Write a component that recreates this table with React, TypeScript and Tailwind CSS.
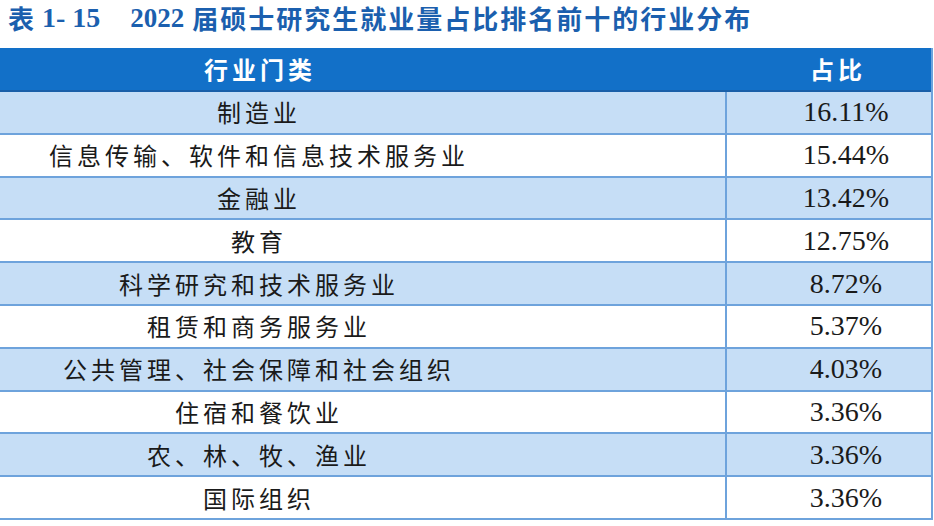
import React from 'react';

const rows: [string, string][] = [
  ['制造业', '16.11%'],
  ['信息传输、软件和信息技术服务业', '15.44%'],
  ['金融业', '13.42%'],
  ['教育', '12.75%'],
  ['科学研究和技术服务业', '8.72%'],
  ['租赁和商务服务业', '5.37%'],
  ['公共管理、社会保障和社会组织', '4.03%'],
  ['住宿和餐饮业', '3.36%'],
  ['农、林、牧、渔业', '3.36%'],
  ['国际组织', '3.36%'],
];

const cjk = "font-['Noto_Sans_CJK_SC','Noto_Sans',sans-serif]";
const serif = "font-['Liberation_Serif','Noto_Sans_CJK_SC',serif]";

const App: React.FC = () => {
  return (
    <div className="w-[934px] h-[526px] bg-white overflow-hidden">
      {/* title */}
      <div className="h-[48px] flex items-start pl-[8px] text-[#1b5fae] font-bold">
        <span className={`${cjk} text-[26px] leading-[36px]`}>表</span>
        <span className={`${serif} text-[28px] leading-[36px] ml-[8px]`}>1- 15</span>
        <span className={`${serif} text-[27px] leading-[36px] ml-[30px]`}>2022</span>
        <span className={`${cjk} text-[26px] leading-[36px] ml-[8px] tracking-[2px]`}>
          届硕士研究生就业量占比排名前十的行业分布
        </span>
      </div>

      <div className="w-[933px] border-r-2 border-[#6ea3dc]">
        {/* header */}
        <div className="h-[44px] flex bg-[#1270c8] text-white font-bold border-b-2 border-[#1a5fa8]">
          <div className={`w-[727px] pr-[207px] flex items-center justify-center ${cjk} text-[24px] tracking-[4px]`}>
            行业门类
          </div>
          <div className={`flex-1 pl-[18px] flex items-center justify-center ${cjk} text-[24px] tracking-[4px]`}>
            占比
          </div>
        </div>

        {rows.map(([name, pct], i) => (
          <div
            key={i}
            className={`h-[42.8px] flex border-b-2 border-[#6ea3dc] text-[#1a1a1a] ${
              i % 2 === 0 ? 'bg-[#c6def6]' : 'bg-white'
            }`}
          >
            <div
              className={`w-[727px] pr-[207px] flex items-center justify-center border-r-2 border-[#6ea3dc] ${cjk} text-[24px] tracking-[4px]`}
            >
              {name}
            </div>
            <div className={`flex-1 pl-[34px] flex items-center justify-center ${serif} text-[28px]`}>
              {pct}
            </div>
          </div>
        ))}
      </div>
    </div>
  );
};

export default App;
